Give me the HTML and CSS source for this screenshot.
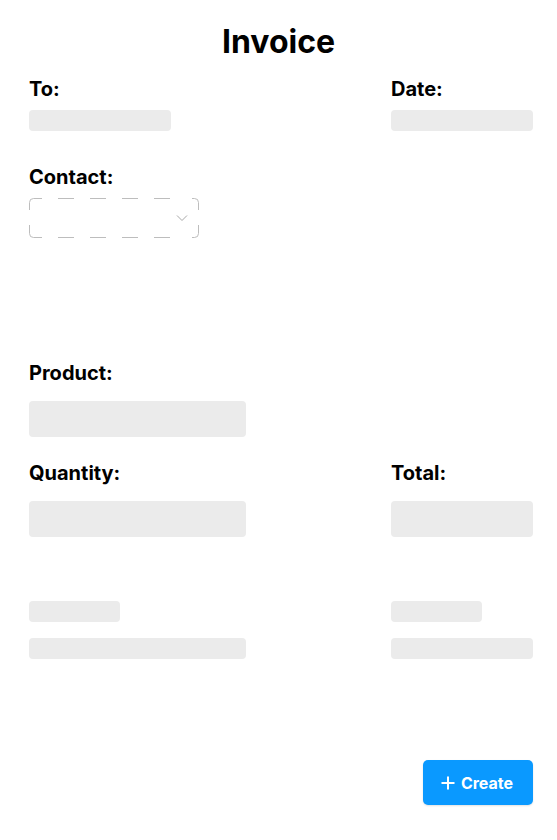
FILE: index.html
```html
<!DOCTYPE html>
<html lang="en">
<head>
<meta charset="utf-8">
<title>Invoice</title>
<link rel="stylesheet" href="styles.css">
</head>
<body>
<main class="page">
  <h1 class="title">Invoice</h1>

  <section class="row row-top">
    <div class="field field-left-sm">
      <div class="label">To:</div>
      <div class="bar bar-thin"></div>
    </div>
    <div class="field field-right">
      <div class="label">Date:</div>
      <div class="bar bar-thin"></div>
    </div>
  </section>

  <section class="contact">
    <div class="label">Contact:</div>
    <div class="select">
      <svg class="select-border" width="170" height="40" viewBox="0 0 170 40">
        <path d="M0.5 12 V4.5 A4 4 0 0 1 4.5 0.5 H13
                 M0.5 27 V35.5 A4 4 0 0 0 4.5 39.5 H13
                 M29 0.5 H45 M61 0.5 H77 M93 0.5 H109 M125 0.5 H141
                 M29 39.5 H45 M61 39.5 H77 M93 39.5 H109 M125 39.5 H141
                 M163 0.5 H165.5 A4 4 0 0 1 169.5 4.5 V12
                 M163 39.5 H165.5 A4 4 0 0 0 169.5 35.5 V27"
              fill="none" stroke="#bdbdbd" stroke-width="1"/>
      </svg>
      <svg class="chevron" width="12" height="8" viewBox="0 0 12 8">
        <path d="M1 1.5 L6 6.5 L11 1.5" fill="none" stroke="#a8a8a8" stroke-width="1"/>
      </svg>
    </div>
  </section>

  <section class="product">
    <div class="label">Product:</div>
    <div class="bar bar-tall bar-wide"></div>
  </section>

  <section class="row row-qty">
    <div class="field field-left">
      <div class="label">Quantity:</div>
      <div class="bar bar-tall"></div>
    </div>
    <div class="field field-right">
      <div class="label">Total:</div>
      <div class="bar bar-tall"></div>
    </div>
  </section>

  <section class="row row-summary">
    <div class="field field-left">
      <div class="bar bar-thin bar-short"></div>
      <div class="bar bar-thin"></div>
    </div>
    <div class="field field-right">
      <div class="bar bar-thin bar-short"></div>
      <div class="bar bar-thin"></div>
    </div>
  </section>

  <footer class="actions">
    <button class="create-btn" type="button">
      <svg class="plus" width="14" height="14" viewBox="0 0 14 14">
        <path d="M7 0.5 V13.5 M0.5 7 H13.5" stroke="#ffffff" stroke-width="2" fill="none"/>
      </svg>
      <span>Create</span>
    </button>
  </footer>
</main>
</body>
</html>
```

FILE: styles.css
```css
* {
  box-sizing: border-box;
}

html, body {
  margin: 0;
  padding: 0;
  background: #ffffff;
}

body {
  font-family: Inter, "Liberation Sans", Arial, sans-serif;
  color: #000000;
}

.page {
  width: 557px;
  height: 840px;
  padding: 0 24px 0 29px;
  display: flex;
  flex-direction: column;
}

.title {
  margin: 23px -24px 0 -29px;
  font-size: 32px;
  line-height: 38px;
  font-weight: 700;
  text-align: center;
}

.label {
  font-size: 20px;
  line-height: 22px;
  font-weight: 700;
}

.row {
  display: flex;
  justify-content: space-between;
}

.field {
  display: flex;
  flex-direction: column;
}

.field-left-sm {
  width: 142px;
}

.field-left {
  width: 217px;
}

.field-right {
  width: 142px;
}

.bar {
  background: #ebebeb;
  border-radius: 4px;
}

.bar-thin {
  height: 21px;
}

.bar-tall {
  height: 36px;
}

.bar-wide {
  width: 217px;
}

.bar-short {
  width: 91px;
}

.row-top {
  margin-top: 17px;
}

.row-top .bar {
  margin-top: 10px;
}

.contact {
  margin-top: 35px;
  display: flex;
  flex-direction: column;
}

.select {
  position: relative;
  margin-top: 10px;
  width: 170px;
  height: 40px;
}

.select-border {
  position: absolute;
  left: 0;
  top: 0;
  display: block;
}

.chevron {
  position: absolute;
  left: 147px;
  top: 16px;
  display: block;
}

.product {
  margin-top: 124px;
  display: flex;
  flex-direction: column;
}

.product .bar {
  margin-top: 17px;
}

.row-qty {
  margin-top: 25px;
}

.row-qty .bar {
  margin-top: 17px;
}

.row-summary {
  margin-top: 64px;
}

.row-summary .bar + .bar {
  margin-top: 16px;
}

.actions {
  margin-top: auto;
  margin-bottom: 35px;
  display: flex;
  justify-content: flex-end;
}

.create-btn {
  width: 110px;
  height: 45px;
  border: none;
  border-radius: 5px;
  background: #0a99ff;
  color: #ffffff;
  font-family: Inter, "Liberation Sans", Arial, sans-serif;
  font-size: 16px;
  font-weight: 700;
  display: flex;
  align-items: center;
  justify-content: center;
  gap: 6px;
  padding: 0 2px 0 0;
  box-shadow: 0 1px 2px rgba(0, 0, 0, 0.12);
}

.plus {
  display: block;
}
```
